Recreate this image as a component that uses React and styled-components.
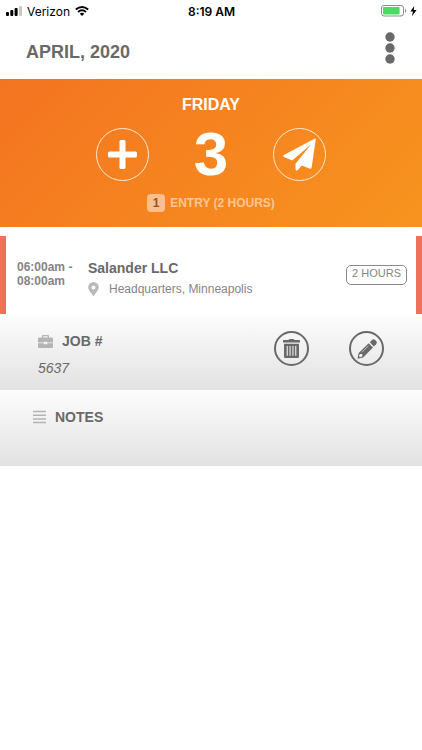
import styled, { createGlobalStyle } from 'styled-components'

const entry = {
  start: '06:00am',
  end: '08:00am',
  company: 'Salander LLC',
  place: 'Headquarters, Minneapolis',
  hours: '2 HOURS',
  job: '5637',
}

const SignalIcon = () => (
  <svg width="16" height="10" viewBox="0 0 16 10" aria-hidden="true">
    <rect x="0" y="6" width="3" height="4" rx="1" />
    <rect x="4.300" y="4" width="3" height="6" rx="1" />
    <rect x="8.600" y="2" width="3" height="8" rx="1" />
    <rect x="13" y="0" width="3" height="10" rx="1" fill="#c8c8c8" />
  </svg>
)

const WifiIcon = () => (
  <svg width="14" height="10" viewBox="0 0 14 10" aria-hidden="true">
    <path d="M.8 3.6Q7-1.6 13.2 3.6M3 6Q7 2.7 11 6" fill="none" stroke="#000" strokeWidth="1.9" />
    <path d="M4.7 7.7Q7 5.9 9.3 7.7L7 10Z" />
  </svg>
)

const BatteryIcon = () => (
  <svg width="36" height="12" viewBox="0 0 36 12" aria-hidden="true">
    <rect x=".5" y=".5" width="22" height="10.500" rx="2.500" fill="#fff" stroke="#8d8d8d" />
    <rect x="2" y="2" width="16.600" height="7.500" rx="1" fill="#4cd964" />
    <path d="M24 3.800q1.200.6 1.200 2t-1.200 2z" fill="#8d8d8d" />
    <path d="M33.200 1 29.400 6.600h2.600L30.900 11.200l4.700-6.100h-2.800z" />
  </svg>
)

const DotsIcon = () => (
  <svg width="10" height="32" viewBox="0 0 10 32" fill="#696969" aria-hidden="true">
    <circle cx="5" cy="5" r="4.7" />
    <circle cx="5" cy="16" r="4.7" />
    <circle cx="5" cy="27" r="4.7" />
  </svg>
)

const PlusIcon = () => (
  <svg width="29" height="29" viewBox="0 0 29 29" fill="#fff" aria-hidden="true">
    <rect x="11.500" y="0" width="6" height="29" rx="1.5" />
    <rect x="0" y="11.500" width="29" height="6" rx="1.5" />
  </svg>
)

const PlaneIcon = () => (
  <svg width="33" height="33" viewBox="0 0 33 33" fill="#fff" aria-hidden="true">
    <path d="M31.400.7q1.500-.6 1.300 1L28.600 29.800q-.3 1.400-1.600.9L18.800 27.400l-4 4.600q-2.200 1.400-2.300-.7v-5.600L28.200 6.200 9.200 22.400 1 19q-1.600-.8-.1-1.900z" />
  </svg>
)

const PinIcon = () => (
  <svg width="11" height="14" viewBox="0 0 11 14" fill="#b9b9b9" aria-hidden="true">
    <path fillRule="evenodd" d="M5.5 0A5.3 5.3 0 0 0 .2 5.3C.2 8 2 9 4.6 13.3q.9 1.2 1.8 0C9 9 10.8 8 10.8 5.3A5.3 5.3 0 0 0 5.5 0Zm0 3.4a2 2 0 1 1 0 4 2 2 0 0 1 0-4Z" />
  </svg>
)

const BriefcaseIcon = () => (
  <svg width="15" height="13" viewBox="0 0 15 13" fill="#b4b4b4" aria-hidden="true">
    <path fillRule="evenodd" d="M4 2.5V1q0-1 1-1h5q1 0 1 1v1.500h2.700q1.300 0 1.300 1.300V7.500H9.300V6.800H5.700v.7H0V3.800q0-1.300 1.300-1.300zM5.300 2.500h4.400v-1.200H5.300z" />
    <path d="M0 8.300h5.700v.9h3.600v-.9H15v3.400q0 1.300-1.300 1.300H1.300Q0 13 0 11.700z" />
  </svg>
)

const LinesIcon = () => (
  <svg width="13" height="14" viewBox="0 0 13 14" aria-hidden="true">
    <path d="M0 1.500h13M0 5.200h13M0 8.900h13M0 12.600h13" stroke="#b4b4b4" strokeWidth="1.500" />
  </svg>
)

const TrashIcon = () => (
  <svg width="17" height="19" viewBox="0 0 17 19" fill="#696969" aria-hidden="true">
    <path d="M.8 1H5.500L6.500 0h4l1 1H16.200q.8 0 .8.700V3.600H0V1.700Q0 1 .8 1z" />
    <path fillRule="evenodd" d="M1 4.800h15v13q0 1.200-1.200 1.200H2.200Q1 19 1 17.800zM3.700 7V16.800h1.100V7zM6.500 7V16.800h1.100V7zM9.400 7V16.800h1.100V7zM12.200 7V16.800h1.100V7z" />
  </svg>
)

const PencilIcon = () => (
  <svg width="20" height="20" viewBox="0 0 20 20" fill="#696969" aria-hidden="true">
    <path d="M12.800 3.200 15 .9q1.600-1.300 3.200.2l.9.900q1.400 1.600 0 3.200l-2.300 2.300z" />
    <path fillRule="evenodd" d="M11.700 4.200 15.900 8.400 6.200 18.400.5 19.700 1.700 14zM2.800 14.900 2 17.300 3 18.300 5.300 17.500V15z" />
    <path d="M5 13.200 11.500 6.700" stroke="#d6d6d6" strokeWidth=".8" />
  </svg>
)

function App() {
  return (
    <>
      <GlobalStyle />
      <StatusBar>
        <Carrier>
          <SignalIcon />
          <span>Verizon</span>
          <WifiIcon />
        </Carrier>
        <Clock>8:19 AM</Clock>
        <Battery>
          <BatteryIcon />
        </Battery>
      </StatusBar>
      <Header>
        <Month>APRIL, 2020</Month>
        <MenuButton aria-label="Menu">
          <DotsIcon />
        </MenuButton>
      </Header>
      <main>
        <Day>
          <DayName>FRIDAY</DayName>
          <DayRow>
            <RoundButton $size={53} $border="1px solid #ffe9d0" aria-label="Add entry">
              <PlusIcon />
            </RoundButton>
            <DayNumber>3</DayNumber>
            <RoundButton $size={53} $border="1px solid #ffe9d0" aria-label="Send">
              <PlaneIcon />
            </RoundButton>
          </DayRow>
          <Summary>
            <Count>1</Count>
            <span>ENTRY (2 HOURS)</span>
          </Summary>
        </Day>
        <Entry>
          <Time>
            {entry.start} -<br />
            {entry.end}
          </Time>
          <Client>
            <Company>{entry.company}</Company>
            <Place>
              <PinIcon />
              {entry.place}
            </Place>
          </Client>
          <Hours>{entry.hours}</Hours>
        </Entry>
        <Panel $indent={38}>
          <div>
            <PanelTitle>
              <BriefcaseIcon />
              JOB #
            </PanelTitle>
            <JobNumber>{entry.job}</JobNumber>
          </div>
          <Actions>
            <RoundButton $size={35} $border="2px solid #696969" aria-label="Delete">
              <TrashIcon />
            </RoundButton>
            <RoundButton $size={35} $border="2px solid #696969" aria-label="Edit">
              <PencilIcon />
            </RoundButton>
          </Actions>
        </Panel>
        <Panel $indent={33}>
          <PanelTitle>
            <LinesIcon />
            NOTES
          </PanelTitle>
        </Panel>
      </main>
    </>
  )
}

export default App

const GlobalStyle = createGlobalStyle`
  * {
    box-sizing: border-box;
  }

  body {
    margin: 0;
    background: #fff;
    color: #696969;
    font-family: "Liberation Sans", Arial, sans-serif;
  }

  svg {
    display: block;
    flex-shrink: 0;
  }

  button {
    padding: 0;
    border: none;
    background: none;
    cursor: pointer;
  }
`

const StatusBar = styled.div`
  display: grid;
  grid-template-columns: 1fr auto 1fr;
  align-items: center;
  height: 22px;
  padding: 0 5px 0 6px;
  color: #000;
  font-family: Inter, sans-serif;
  font-size: 12px;
`

const Carrier = styled.div`
  display: flex;
  align-items: center;
  gap: 5px;
`

const Clock = styled.span`
  font-weight: 600;
`

const Battery = styled.div`
  display: flex;
  justify-content: flex-end;
`

const Header = styled.header`
  display: flex;
  justify-content: space-between;
  align-items: flex-start;
  height: 57px;
  padding: 10px 27px 0 26px;
`

const Month = styled.h1`
  margin: 9px 0 0;
  font-size: 18px;
  line-height: 22px;
`

const MenuButton = styled.button`
  display: flex;
`

const Day = styled.section`
  display: flex;
  flex-direction: column;
  align-items: center;
  height: 148px;
  padding-top: 16px;
  background: linear-gradient(135deg, #f47421, #f7941e);
  color: #fff;
`

const DayName = styled.h2`
  margin: 0;
  font-size: 16px;
  line-height: 20px;
`

const DayRow = styled.div`
  display: flex;
  align-items: center;
  justify-content: center;
  gap: 45px;
  margin-top: 12px;
`

const DayNumber = styled.span`
  font-size: 62px;
  font-weight: 700;
  line-height: 54px;
`

const RoundButton = styled.button`
  display: flex;
  align-items: center;
  justify-content: center;
  width: ${({ $size }) => $size}px;
  height: ${({ $size }) => $size}px;
  border: ${({ $border }) => $border};
  border-radius: 50%;
`

const Summary = styled.div`
  display: flex;
  align-items: center;
  gap: 5px;
  margin-top: 13px;
  color: #fcc797;
  font-size: 12px;
  font-weight: 700;
`

const Count = styled.span`
  width: 18px;
  border-radius: 4px;
  background: #fabf8e;
  color: #8f5526;
  line-height: 18px;
  text-align: center;
`

const Entry = styled.section`
  display: flex;
  height: 78px;
  margin-top: 9px;
  padding: 24px 9px 0 11px;
  border: solid #ef705b;
  border-width: 0 6px;
`

const Time = styled.div`
  width: 71px;
  color: #858585;
  font-size: 12px;
  font-weight: 700;
  line-height: 14px;
`

const Client = styled.div`
  flex: 1;
`

const Company = styled.h3`
  margin: 0;
  font-size: 14px;
  line-height: 16px;
`

const Place = styled.div`
  display: flex;
  align-items: center;
  gap: 10px;
  margin-top: 5px;
  color: #858585;
  font-size: 12px;
  line-height: 16px;
`

const Hours = styled.div`
  height: 20px;
  margin-top: 5px;
  padding: 0 5px;
  border: 1px solid #8a8a8a;
  border-radius: 5px;
  color: #858585;
  font-size: 11px;
  line-height: 15px;
`

const Panel = styled.section`
  display: flex;
  justify-content: space-between;
  align-items: flex-start;
  height: 76px;
  padding: 17px 38px 0 ${({ $indent }) => $indent}px;
  background: linear-gradient(#fdfdfd, #e2e2e2);
`

const PanelTitle = styled.h4`
  display: flex;
  align-items: center;
  gap: 9px;
  margin: 0;
  font-size: 14px;
  line-height: 20px;
`

const JobNumber = styled.div`
  margin-top: 7px;
  font-size: 14px;
  font-style: italic;
  line-height: 20px;
`

const Actions = styled.div`
  display: flex;
  align-items: flex-start;
  gap: 40px;
`
